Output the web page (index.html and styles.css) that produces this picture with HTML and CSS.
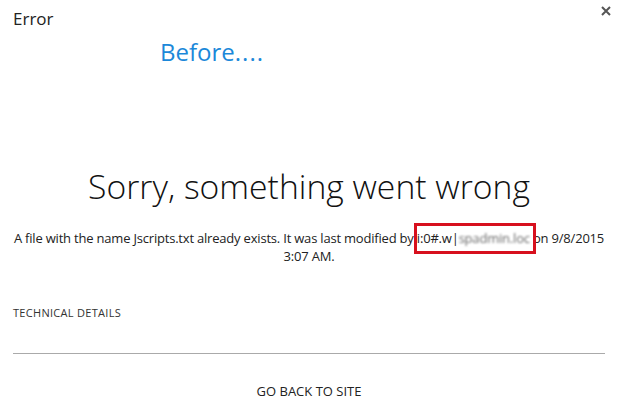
FILE: index.html
```html
<!DOCTYPE html>
<html lang="en">
<head>
<meta charset="utf-8">
<title>Error</title>
<link rel="stylesheet" href="styles.css">
</head>
<body>
<div class="dialog">
  <header class="dialog-header">
    <h1 class="dialog-title">Error</h1>
    <button class="close-btn" aria-label="Close">
      <svg width="10" height="10" viewBox="0 0 10 10"><path d="M1 1L9 9M9 1L1 9" stroke="#555" stroke-width="2"/></svg>
    </button>
  </header>
  <div class="note">Before<span class="note-dots">....</span></div>
  <main class="content">
    <h2 class="headline">Sorry, something went wrong</h2>
    <p class="message">A file with the name Jscripts.txt already exists. It was last modified by <span class="highlight">i:0#.w|<span class="redacted">spadmin.loc</span></span> on 9/8/2015 3:07 AM.</p>
  </main>
  <section class="details">
    <div class="details-label">TECHNICAL DETAILS</div>
    <hr class="divider">
  </section>
  <div class="actions">
    <a class="back-link" href="#">GO BACK TO SITE</a>
  </div>
</div>
</body>
</html>
```
FILE: styles.css
```css
html, body {
  margin: 0;
  padding: 0;
  background: #fff;
}
body {
  font-family: "Open Sans", "Noto Sans", sans-serif;
  color: #222;
  width: 618px;
  height: 404px;
  overflow: hidden;
}
.dialog {
  padding: 0 13px;
}
.dialog-header {
  display: flex;
  justify-content: space-between;
  align-items: flex-start;
  padding-top: 8px;
}
.dialog-title {
  margin: 0;
  font-size: 17px;
  font-weight: 400;
  line-height: 22px;
  color: #222;
}
.close-btn {
  border: 0;
  background: none;
  padding: 0;
  margin-top: -4px;
  margin-right: -8px;
  width: 14px;
  height: 14px;
  display: flex;
  align-items: center;
  justify-content: center;
}
.note {
  padding-left: 147px;
  margin-top: 7px;
  font-size: 24px;
  line-height: 30px;
  color: #1b88d9;
}
.note-dots {
  letter-spacing: 1px;
}
.content {
  margin-top: 97px;
  text-align: center;
}
.headline {
  margin: 0;
  font-size: 33.7px;
  font-weight: 300;
  line-height: 44px;
  color: #111;
}
.message {
  margin: 21px 0 0;
  font-size: 13px;
  letter-spacing: -0.2px;
  line-height: 18px;
  color: #222;
}
.highlight {
  position: relative;
}
.highlight::after {
  content: "";
  position: absolute;
  left: -3px;
  right: -6px;
  top: -6px;
  bottom: -7px;
  border: 3px solid #d7101e;
}
.redacted {
  color: #6a6a6a;
  filter: blur(1px);
}
.details {
  margin-top: 41px;
}
.details-label {
  font-size: 11px;
  letter-spacing: 0.3px;
  color: #333;
  line-height: 14px;
}
.divider {
  margin: 33px 0 0;
  border: 0;
  border-top: 1px solid #aaa;
}
.actions {
  text-align: center;
  margin-top: 25px;
}
.back-link {
  font-size: 13px;
  color: #222;
  text-decoration: none;
}
```
